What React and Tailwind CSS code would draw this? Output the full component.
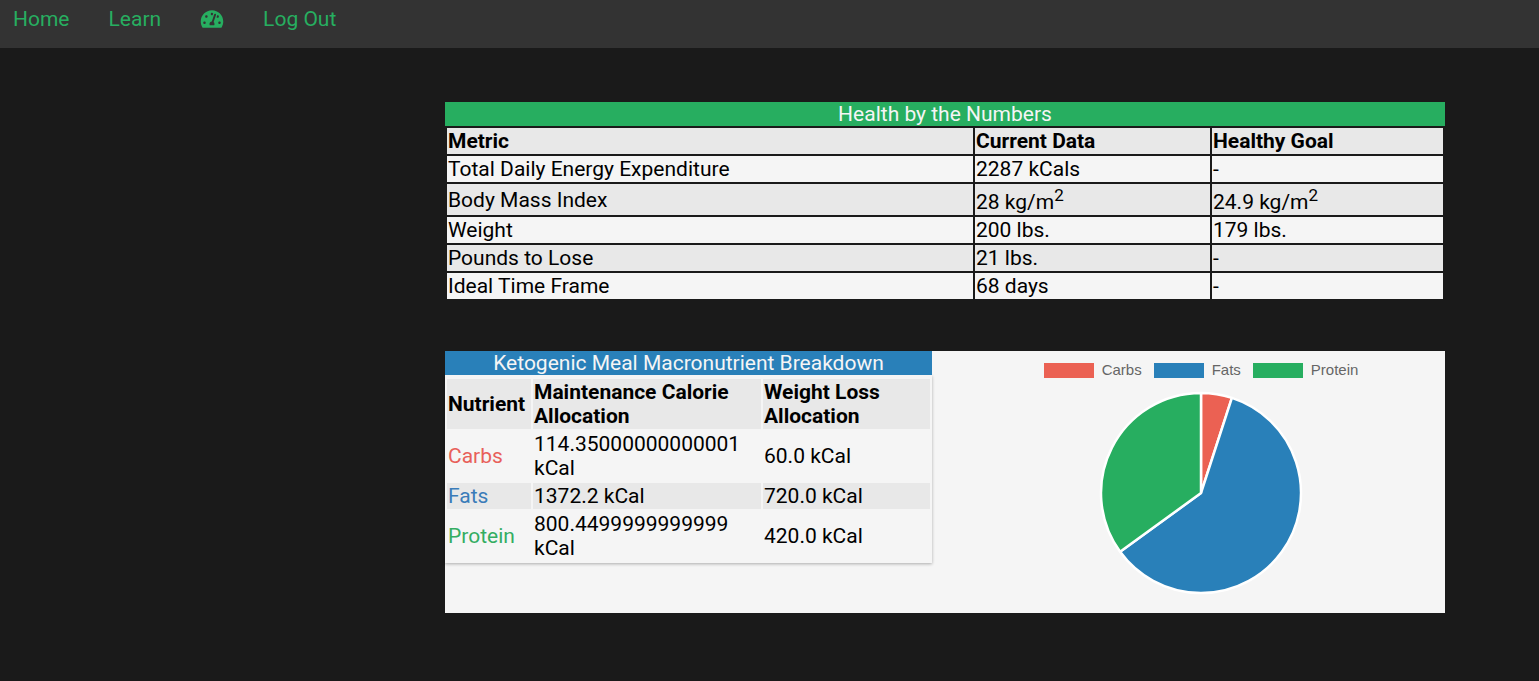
import { FaTachometerAlt } from "react-icons/fa";

function Squared() {
  return <sup className="static align-super text-[17px] leading-5">2</sup>;
}

const metrics = [
  ["Total Daily Energy Expenditure", "2287 kCals", "-"],
  ["Body Mass Index", <>28 kg/m<Squared /></>, <>24.9 kg/m<Squared /></>],
  ["Weight", "200 lbs.", "179 lbs."],
  ["Pounds to Lose", "21 lbs.", "-"],
  ["Ideal Time Frame", "68 days", "-"],
];

const nutrients = [
  { name: "Carbs", maintenance: "114.35000000000001 kCal", loss: "60.0 kCal", share: 60, text: "text-[#e8605a]", swatch: "bg-[#eb6153]", fill: "fill-[#eb6153]" },
  { name: "Fats", maintenance: "1372.2 kCal", loss: "720.0 kCal", share: 720, text: "text-[#3a7cb9]", swatch: "bg-[#2980b9]", fill: "fill-[#2980b9]" },
  { name: "Protein", maintenance: "800.4499999999999 kCal", loss: "420.0 kCal", share: 420, text: "text-[#34ad62]", swatch: "bg-[#27ae60]", fill: "fill-[#27ae60]" },
];

function NavBar() {
  return (
    <nav className="h-12 bg-[#333] px-[13px] pt-[7px] text-[#27ae60]">
      <ul className="flex items-center gap-[39px]">
        <li><a href="#home">Home</a></li>
        <li><a href="#learn">Learn</a></li>
        <li><a href="#dashboard" aria-label="Dashboard"><FaTachometerAlt className="h-5 w-6" /></a></li>
        <li><a href="#logout">Log Out</a></li>
      </ul>
    </nav>
  );
}

function HealthTable() {
  return (
    <table className="w-full table-fixed border-separate border-spacing-[2px] text-left">
      <caption className="bg-[#27ae60] text-[#f5f5f5]">Health by the Numbers</caption>
      <colgroup>
        <col />
        <col className="w-[235px]" />
        <col className="w-[231px]" />
      </colgroup>
      <thead>
        <tr className="bg-[#e8e8e8]">
          <th className="p-px">Metric</th>
          <th className="p-px">Current Data</th>
          <th className="p-px">Healthy Goal</th>
        </tr>
      </thead>
      <tbody>
        {metrics.map(([name, current, goal]) => (
          <tr key={name} className="bg-[#f5f5f5] even:bg-[#e8e8e8]">
            <td className="p-px">{name}</td>
            <td className="p-px">{current}</td>
            <td className="p-px">{goal}</td>
          </tr>
        ))}
      </tbody>
    </table>
  );
}

function MacroTable() {
  return (
    <table className="w-[487px] table-fixed border-separate border-spacing-[2px] self-start bg-[#f5f5f5] pt-[2px] text-left shadow-[0_1px_3px_rgba(0,0,0,0.3)]">
      <caption className="bg-[#2980b9] text-[#f5f5f5]">Ketogenic Meal Macronutrient Breakdown</caption>
      <colgroup>
        <col className="w-[84px]" />
        <col className="w-[228px]" />
        <col />
      </colgroup>
      <thead>
        <tr className="bg-[#e8e8e8]">
          <th className="p-px">Nutrient</th>
          <th className="p-px">Maintenance Calorie Allocation</th>
          <th className="p-px">Weight Loss Allocation</th>
        </tr>
      </thead>
      <tbody>
        {nutrients.map((n) => (
          <tr key={n.name} className="even:bg-[#e8e8e8]">
            <td className={`p-px ${n.text}`}>{n.name}</td>
            <td className="p-px">{n.maintenance}</td>
            <td className="p-px">{n.loss}</td>
          </tr>
        ))}
      </tbody>
    </table>
  );
}

function PieChart() {
  const total = nutrients.reduce((sum, n) => sum + n.share, 0);
  const point = (t) => `${102 + 100 * Math.sin(2 * Math.PI * t)} ${102 - 100 * Math.cos(2 * Math.PI * t)}`;
  let start = 0;
  const slices = nutrients.map((n) => {
    const end = start + n.share / total;
    const d = `M102 102 L${point(start)} A100 100 0 ${end - start > 0.5 ? 1 : 0} 1 ${point(end)} Z`;
    start = end;
    return { ...n, d };
  });
  return (
    <figure className="flex flex-1 flex-col items-center pt-[9px] pb-[18px] pl-[25px]">
      <figcaption className="flex gap-3 font-['Liberation_Sans',Arial,sans-serif] text-[15px] leading-5 text-[#666]">
        {nutrients.map((n) => (
          <span key={n.name} className="flex items-center gap-2">
            <span className={`h-[15px] w-[50px] ${n.swatch}`} />
            {n.name}
          </span>
        ))}
      </figcaption>
      <svg viewBox="0 0 204 204" className="mt-[11px] size-[204px]" role="img" aria-label="Macronutrient shares">
        {slices.map((s) => (
          <path key={s.name} d={s.d} className={`${s.fill} stroke-white`} strokeWidth="2.5" strokeLinejoin="bevel" />
        ))}
      </svg>
    </figure>
  );
}

export default function App() {
  return (
    <div className="min-h-screen bg-[#1a1a1a] font-[Roboto,sans-serif] text-[21px] leading-6 text-black">
      <NavBar />
      <main className="mr-[94px] ml-auto flex max-w-[1000px] flex-col gap-[50px] pt-[54px] pb-[68px]">
        <HealthTable />
        <section className="flex bg-[#f5f5f5]">
          <MacroTable />
          <PieChart />
        </section>
      </main>
    </div>
  );
}
